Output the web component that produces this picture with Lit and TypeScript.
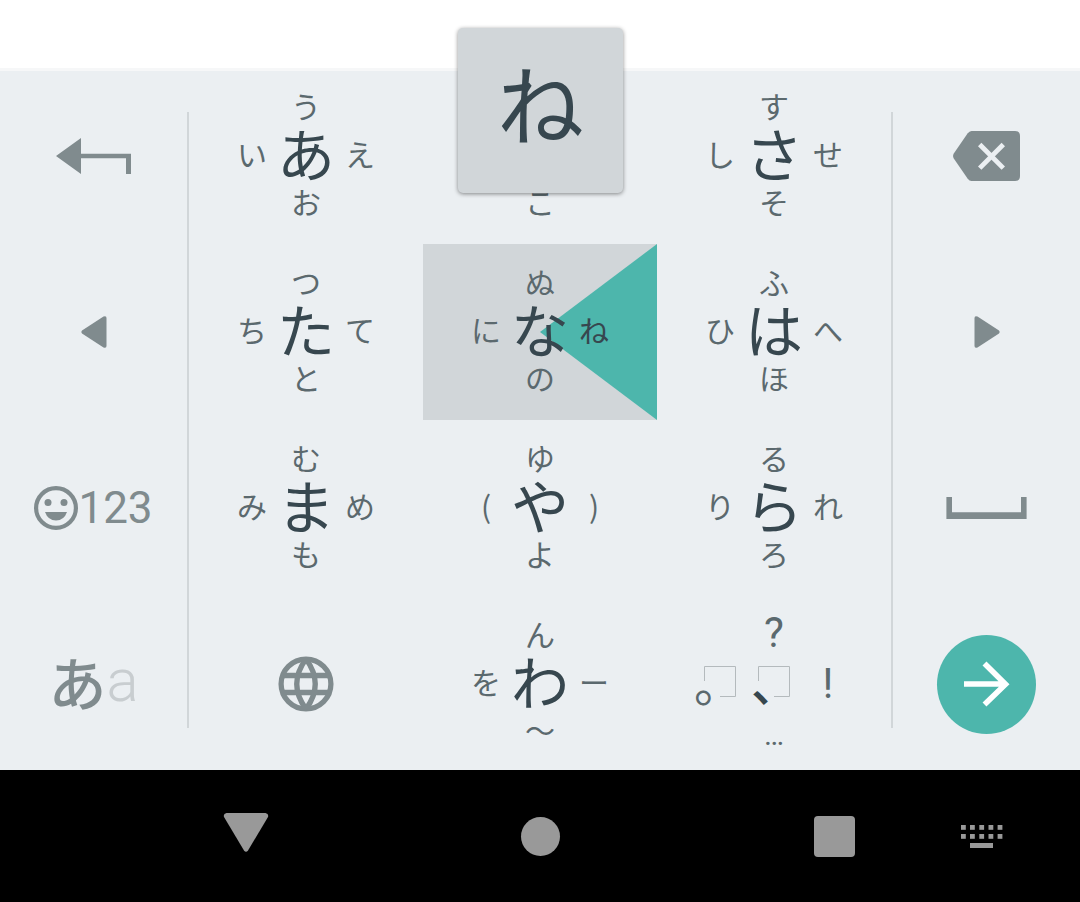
import { LitElement, html, css, svg, nothing } from "lit";
import { customElement, property } from "lit/decorators.js";

type Flick = { main: string; left?: string; up?: string; right?: string; down?: string };

const ROWS: Flick[] = [
  { main: "あ", left: "い", up: "う", right: "え", down: "お" },
  { main: "か", left: "き", up: "く", right: "け", down: "こ" },
  { main: "さ", left: "し", up: "す", right: "せ", down: "そ" },
  { main: "た", left: "ち", up: "つ", right: "て", down: "と" },
  { main: "な", left: "に", up: "ぬ", right: "ね", down: "の" },
  { main: "は", left: "ひ", up: "ふ", right: "へ", down: "ほ" },
  { main: "ま", left: "み", up: "む", right: "め", down: "も" },
  { main: "や", left: "(", up: "ゆ", right: ")", down: "よ" },
  { main: "ら", left: "り", up: "る", right: "れ", down: "ろ" },
];

const WA: Flick = { main: "わ", left: "を", up: "ん", right: "ー", down: "〜" };

@customElement("flick-key")
class FlickKey extends LitElement {
  @property({ attribute: false }) flick!: Flick;
  @property({ type: Boolean, reflect: true }) pressed = false;
  @property() preview = "";

  static styles = css`
    :host {
      display: block;
      position: relative;
    }
    .key {
      display: grid;
      grid-template-columns: repeat(3, 54px);
      grid-template-rows: repeat(3, 48px);
      grid-template-areas: ". up ." "left main right" ". down .";
      place-content: center;
      box-sizing: border-box;
      width: 100%;
      height: 100%;
      margin: 0;
      padding: 0 0 6px;
      border: 0;
      background: none;
      color: #5b696e;
      font: 400 30px/48px "Noto Sans CJK JP", sans-serif;
      cursor: pointer;
    }
    :host([pressed]) .key { background: #d1d6d9; }
    .wedge {
      position: absolute;
      inset: 0 0 0 50%;
      background: #4db6ac;
      clip-path: polygon(0 50%, 100% 0, 100% 100%);
    }
    .cell {
      display: flex;
      align-items: center;
      justify-content: center;
      position: relative;
      min-width: 0;
    }
    .main {
      grid-area: main;
      padding-bottom: 2px;
      color: #37474f;
      font-size: 58px;
      line-height: 46px;
    }
    .left { grid-area: left; }
    .up { grid-area: up; }
    .right { grid-area: right; }
    .down { grid-area: down; }
    :host([pressed]) .right { color: #37474f; }
    .preview {
      position: absolute;
      z-index: 2;
      top: -40px;
      left: 50%;
      box-sizing: border-box;
      width: 165px;
      height: 165px;
      margin-left: -82px;
      padding-bottom: 18px;
      display: flex;
      align-items: center;
      justify-content: center;
      border-radius: 5px;
      background: #d1d6d9;
      box-shadow: 0 1px 4px rgba(0, 0, 0, 0.45);
      color: #37474f;
      font: 400 87px/147px "Noto Sans CJK JP", sans-serif;
    }
  `;

  render() {
    const f = this.flick;
    return html`
      <button class="key" type="button">
        ${this.pressed ? html`<span class="wedge"></span>` : nothing}
        <span class="cell up">${f.up}</span>
        <span class="cell left">${f.left}</span>
        <span class="cell main">${f.main}</span>
        <span class="cell right">${f.right}</span>
        <span class="cell down">${f.down}</span>
      </button>
      ${this.preview ? html`<div class="preview">${this.preview}</div>` : nothing}
    `;
  }
}

const frame = svg`<path d="M11.5 21V6.5H42.5V36.5H27" fill="none" stroke="#b4babd" stroke-width="1"/>`;

@customElement("app-root")
class AppRoot extends LitElement {
  static styles = css`
    :host {
      display: flex;
      flex-direction: column;
      min-height: 100vh;
      background: #fff;
      font-family: Roboto, "Noto Sans CJK JP", sans-serif;
    }
    .page { flex: 1; }
    .keyboard {
      display: grid;
      grid-template-columns: 187fr 2px 702fr 2px 187fr;
      margin-bottom: -2px;
      background: #ebeff2;
      box-shadow: inset 0 3px #f6f7f8;
    }
    .side,
    .kana {
      display: grid;
      grid-template-rows: repeat(4, 176px);
    }
    .kana { grid-template-columns: repeat(3, 1fr); }
    .divider {
      margin: 44px 0;
      background: #d1d6d9;
    }
    button {
      display: flex;
      align-items: center;
      justify-content: center;
      margin: 0;
      padding: 0;
      border: 0;
      background: none;
      color: #808b8e;
      font-family: inherit;
      cursor: pointer;
    }
    svg {
      display: block;
      flex: none;
      overflow: visible;
    }
    .digits { font-size: 44px; line-height: 48px; }
    .mode { padding-bottom: 6px; }
    .hira {
      font: 500 58px/64px "Noto Sans CJK JP", sans-serif;
    }
    .latin {
      color: #c8cdd0;
      font-size: 60px;
      font-weight: 300;
      line-height: 64px;
    }
    .enter {
      width: 99px;
      height: 99px;
      place-self: center;
      border-radius: 50%;
      background: #4db6ac;
      color: #fff;
    }
    .punct {
      display: grid;
      grid-template-columns: repeat(3, 54px);
      grid-template-rows: 54px 48px 54px;
      grid-template-areas: ". up ." "left main right" ". down .";
      place-content: center;
      place-items: center;
      color: #5b696e;
      font-size: 42px;
      line-height: 48px;
    }
    .up { grid-area: up; }
    .left { grid-area: left; }
    .main { grid-area: main; }
    .right { grid-area: right; }
    .down { grid-area: down; font-size: 30px; }
    .mark {
      font: 400 48px "Noto Sans CJK JP", sans-serif;
      fill: #5b696e;
    }
    .mark.strong {
      font-weight: 500;
      fill: #37474f;
    }
    .nav {
      position: relative;
      display: grid;
      grid-template-columns: 148fr 196fr 98fr 196fr 98fr 196fr 100fr 48fr;
      height: 132px;
      background: #000;
    }
    .nav button { color: #999; }
    .back { grid-column: 2; }
    .home { grid-column: 4; }
    .recent { grid-column: 6; }
    .ime { grid-column: 7; }
  `;

  render() {
    return html`
      <main class="page"></main>
      <section class="keyboard" aria-label="Keyboard">
        <div class="side">
          <button type="button" aria-label="Undo">
            <svg width="75" height="36" viewBox="0 0 75 36" fill="currentColor">
              <path d="M0 18L25 0V15.7H75V36H70V20.3H25V36Z" />
            </svg>
          </button>
          <button type="button" aria-label="Cursor left">
            <svg width="26" height="32" viewBox="0 0 26 32" fill="currentColor">
              <path d="M1 14.5L22.5 .6Q25.5 -.5 25.5 2V30Q25.5 32.5 22.5 31.4L1 17.5Q-.5 16 1 14.5Z" />
            </svg>
          </button>
          <button type="button" aria-label="Emoji and numbers">
            <svg width="44" height="44" viewBox="0 0 44 44" fill="currentColor">
              <circle cx="22" cy="22" r="19.9" fill="none" stroke="currentColor" stroke-width="4.2" />
              <circle cx="14" cy="16.5" r="3.5" />
              <circle cx="30" cy="16.5" r="3.5" />
              <path d="M11 26H33Q30 34.5 22 34.5T11 26Z" />
            </svg>
            <span class="digits">123</span>
          </button>
          <button type="button" class="mode" aria-label="Switch language mode">
            <span class="hira">あ</span><span class="latin">a</span>
          </button>
        </div>
        <div class="divider"></div>
        <div class="kana">
          ${ROWS.map(
            (f) => html`<flick-key
              .flick=${f}
              ?pressed=${f.main === "な"}
              preview=${f.main === "か" ? "ね" : ""}
            ></flick-key>`
          )}
          <button type="button" aria-label="Change keyboard">
            <svg width="56" height="56" viewBox="0 0 56 56" fill="none" stroke="currentColor" stroke-width="5.3">
              <circle cx="28" cy="28" r="24.9" />
              <path d="M5 19.5H51M5 36.5H51M28 3Q9.5 28 28 53M28 3Q46.5 28 28 53" />
            </svg>
          </button>
          <flick-key .flick=${WA}></flick-key>
          <button type="button" class="punct">
            <span class="up">?</span>
            <svg class="left" width="54" height="48">${frame}<text class="mark" x="1" y="42">。</text></svg>
            <svg class="main" width="54" height="48">${frame}<text class="mark strong" x="4" y="42">、</text></svg>
            <span class="right">!</span>
            <span class="down">…</span>
          </button>
        </div>
        <div class="divider"></div>
        <div class="side">
          <button type="button" aria-label="Backspace">
            <svg width="67" height="50" viewBox="0 0 67 50">
              <path fill="currentColor" d="M18.5 0H62Q67 0 67 5V45Q67 50 62 50H18.5Q16.5 50 14.500 47.5L.8 27.5Q-.7 25 .8 22.5L14.5 2.5Q16.5 0 18.5 0Z" />
              <path stroke="#ebeff2" stroke-width="4.8" d="M26.7 13.5L50.3 37.1M50.3 13.5L26.7 37.1" />
            </svg>
          </button>
          <button type="button" aria-label="Cursor right">
            <svg width="26" height="32" viewBox="0 0 26 32" fill="currentColor">
              <path d="M25 14.5L3.5 .6Q.5 -.5 .5 2V30Q.5 32.5 3.5 31.4L25 17.5Q26.5 16 25 14.5Z" />
            </svg>
          </button>
          <button type="button" aria-label="Space">
            <svg width="81" height="22" viewBox="0 0 81 22" fill="currentColor">
              <path d="M.4 0H6V15.3H75V0H80.6V22H.4Z" />
            </svg>
          </button>
          <button type="button" class="enter" aria-label="Enter">
            <svg width="46" height="46" viewBox="0 0 46 46" fill="none" stroke="currentColor" stroke-width="5.6">
              <path d="M0 23H41M20.5 2.5L41.5 23.3L20.5 43.5" />
            </svg>
          </button>
        </div>
      </section>
      <nav class="nav">
        <button type="button" class="back" aria-label="Back">
          <svg width="46" height="46" viewBox="0 0 46 46" fill="currentColor">
            <path d="M3.5 0H42.5Q46 .8 45 4L25 37.5Q23 40 21 37.5L1 4Q0 .8 3.5 0Z" />
          </svg>
        </button>
        <button type="button" class="home" aria-label="Home">
          <svg width="40" height="40" viewBox="0 0 40 40" fill="currentColor"><circle cx="20.5" cy="20.5" r="19.5" /></svg>
        </button>
        <button type="button" class="recent" aria-label="Recent apps">
          <svg width="41" height="41" viewBox="0 0 41 41" fill="currentColor"><rect width="41" height="41" rx="4" /></svg>
        </button>
        <button type="button" class="ime" aria-label="Choose input method">
          <svg width="42" height="24" viewBox="0 0 42 24" fill="currentColor">
            ${[0, 9, 18.3, 27.5, 36.6].map(
              (x) => svg`<rect x=${x} y="1" width="4.8" height="4.8"/><rect x=${x} y="10" width="4.8" height="4.8"/>`
            )}
            <rect x="9" y="19" width="23" height="5" />
          </svg>
        </button>
      </nav>
    `;
  }
}
